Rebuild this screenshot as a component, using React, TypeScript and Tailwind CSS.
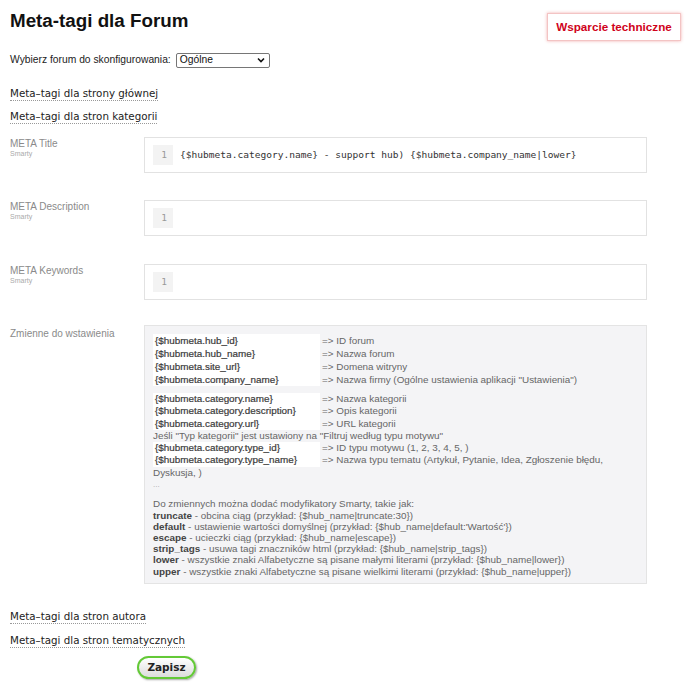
import React from "react";

const sans = { fontFamily: '"Liberation Sans", Arial, sans-serif' };
const lucida = { fontFamily: '"DejaVu Sans", Verdana, sans-serif' };
const mono = { fontFamily: '"DejaVu Sans Mono", "Liberation Mono", monospace' };

function SectionLink({ text, className = "" }: { text: string; className?: string }) {
  return (
    <div
      className={"w-fit text-[10.3px] leading-[13px] text-[#222] border-b border-dotted border-[#999] " + className}
      style={lucida}
    >
      {text}
    </div>
  );
}

function CodeField({ label, value, className = "" }: { label: string; value?: string; className?: string }) {
  return (
    <div className={"flex " + className}>
      <div className="w-[134px] shrink-0 pt-[1px]">
        <div className="text-[10px] leading-[12px] text-[#8a8a8a]">{label}</div>
        <div className="text-[7px] leading-[8px] text-[#aaa]">Smarty</div>
      </div>
      <div className="w-[503px] h-[36px] border border-[#e2e2e2] bg-white flex items-center px-[8px]">
        <div
          className="w-[20px] h-[20px] bg-[#f3f3f3] text-[#999] text-[9.5px] flex items-center justify-end pr-[6px]"
          style={mono}
        >
          1
        </div>
        <div className="pl-[7px] text-[9.55px] text-[#333] whitespace-pre" style={mono}>
          {value}
        </div>
      </div>
    </div>
  );
}

function VarRow({ name, desc }: { name: string; desc: string }) {
  return (
    <div>
      <span className="inline-block w-[167px] bg-white pl-[2px] text-[#3a3a3a] [-webkit-text-stroke:0.2px_#3a3a3a]">
        {name}
      </span>
      <span className="pl-[2px]">=&gt; {desc}</span>
    </div>
  );
}

export default function App() {
  const group1 = [
    ["{$hubmeta.hub_id}", "ID forum"],
    ["{$hubmeta.hub_name}", "Nazwa forum"],
    ["{$hubmeta.site_url}", "Domena witryny"],
    ["{$hubmeta.company_name}", 'Nazwa firmy (Ogólne ustawienia aplikacji "Ustawienia")'],
  ];
  const group2 = [
    ["{$hubmeta.category.name}", "Nazwa kategorii"],
    ["{$hubmeta.category.description}", "Opis kategorii"],
    ["{$hubmeta.category.url}", "URL kategorii"],
  ];
  const mods = [
    ["truncate", " - obcina ciąg (przykład: {$hub_name|truncate:30})"],
    ["default", " - ustawienie wartości domyślnej (przykład: {$hub_name|default:'Wartość'})"],
    ["escape", " - ucieczki ciąg (przykład: {$hub_name|escape})"],
    ["strip_tags", " - usuwa tagi znaczników html (przykład: {$hub_name|strip_tags})"],
    ["lower", " - wszystkie znaki Alfabetyczne są pisane małymi literami (przykład: {$hub_name|lower})"],
    ["upper", " - wszystkie znaki Alfabetyczne są pisane wielkimi literami (przykład: {$hub_name|upper})"],
  ];

  return (
    <div className="w-[700px] h-[698px] bg-white px-[10px] pt-[10px]" style={sans}>
      <div className="float-right mt-[3px] mr-[9px] w-[134px] h-[28px] border border-[#f3c4c4] shadow-[0_0_3px_rgba(230,80,80,0.45)] flex items-center justify-center text-[11.7px] font-bold text-[#d0021b]">
        Wsparcie techniczne
      </div>
      <h1 className="text-[18.8px] leading-[22px] font-bold text-[#111]">Meta-tagi dla Forum</h1>

      <div className="mt-[20px] flex items-center h-[16px] text-[10.3px] text-[#222]">
        <span>Wybierz forum do skonfigurowania:</span>
        <div className="ml-[5px] w-[94px] h-[15px] border border-[#767676] rounded-[2px] flex items-center justify-between pl-[3px] pr-[4px] text-[10.3px] text-[#111]">
          <span>Ogólne</span>
          <svg width="8" height="6" viewBox="0 0 8 6">
            <path d="M1 1.5 L4 4.5 L7 1.5" fill="none" stroke="#111" strokeWidth="1.6" />
          </svg>
        </div>
      </div>

      <SectionLink text="Meta–tagi dla strony głównej" className="mt-[19px]" />
      <SectionLink text="Meta–tagi dla stron kategorii" className="mt-[9px]" />

      <CodeField
        className="mt-[13px]"
        label="META Title"
        value="{$hubmeta.category.name} - support hub) {$hubmeta.company_name|lower}"
      />
      <CodeField className="mt-[27px]" label="META Description" />
      <CodeField className="mt-[28px]" label="META Keywords" />

      <div className="flex mt-[25px]">
        <div className="w-[134px] shrink-0 pt-[3px] text-[10px] leading-[12px] text-[#8a8a8a]">
          Zmienne do wstawienia
        </div>
        <div className="w-[503px] bg-[#f4f4f6] border border-[#e4e4e4] px-[8px] pt-[8px] pb-[6px] text-[9.9px] text-[#666]">
          <div className="leading-[13px]">
            {group1.map(([n, d]) => (
              <VarRow key={n} name={n} desc={d} />
            ))}
          </div>
          <div className="mt-[7px] leading-[12.3px]">
            {group2.map(([n, d]) => (
              <VarRow key={n} name={n} desc={d} />
            ))}
            <div>Jeśli "Typ kategorii" jest ustawiony na "Filtruj według typu motywu"</div>
            <VarRow name="{$hubmeta.category.type_id}" desc="ID typu motywu (1, 2, 3, 4, 5, )" />
            <VarRow
              name="{$hubmeta.category.type_name}"
              desc="Nazwa typu tematu (Artykuł, Pytanie, Idea, Zgłoszenie błędu, Dyskusja, )"
            />
            <div className="text-[#aaa] text-[8px]">...</div>
          </div>
          <div className="mt-[7px] leading-[11.2px]">
            <div>Do zmiennych można dodać modyfikatory Smarty, takie jak:</div>
            {mods.map(([k, d]) => (
              <div key={k}>
                <b className="text-[#444]">{k}</b>
                {d}
              </div>
            ))}
          </div>
        </div>
      </div>

      <SectionLink text="Meta–tagi dla stron autora" className="mt-[26px]" />
      <SectionLink text="Meta–tagi dla stron tematycznych" className="mt-[10px]" />

      <div className="mt-[6px] pl-[127px]">
        <button
          className="w-[59px] h-[23px] rounded-full border-2 border-[#63c936] bg-gradient-to-b from-white to-[#dcdcdc] shadow-[1px_1px_2px_rgba(0,0,0,0.35)] text-[10.5px] font-bold text-[#222]"
          style={lucida}
        >
          Zapisz
        </button>
      </div>
    </div>
  );
}
